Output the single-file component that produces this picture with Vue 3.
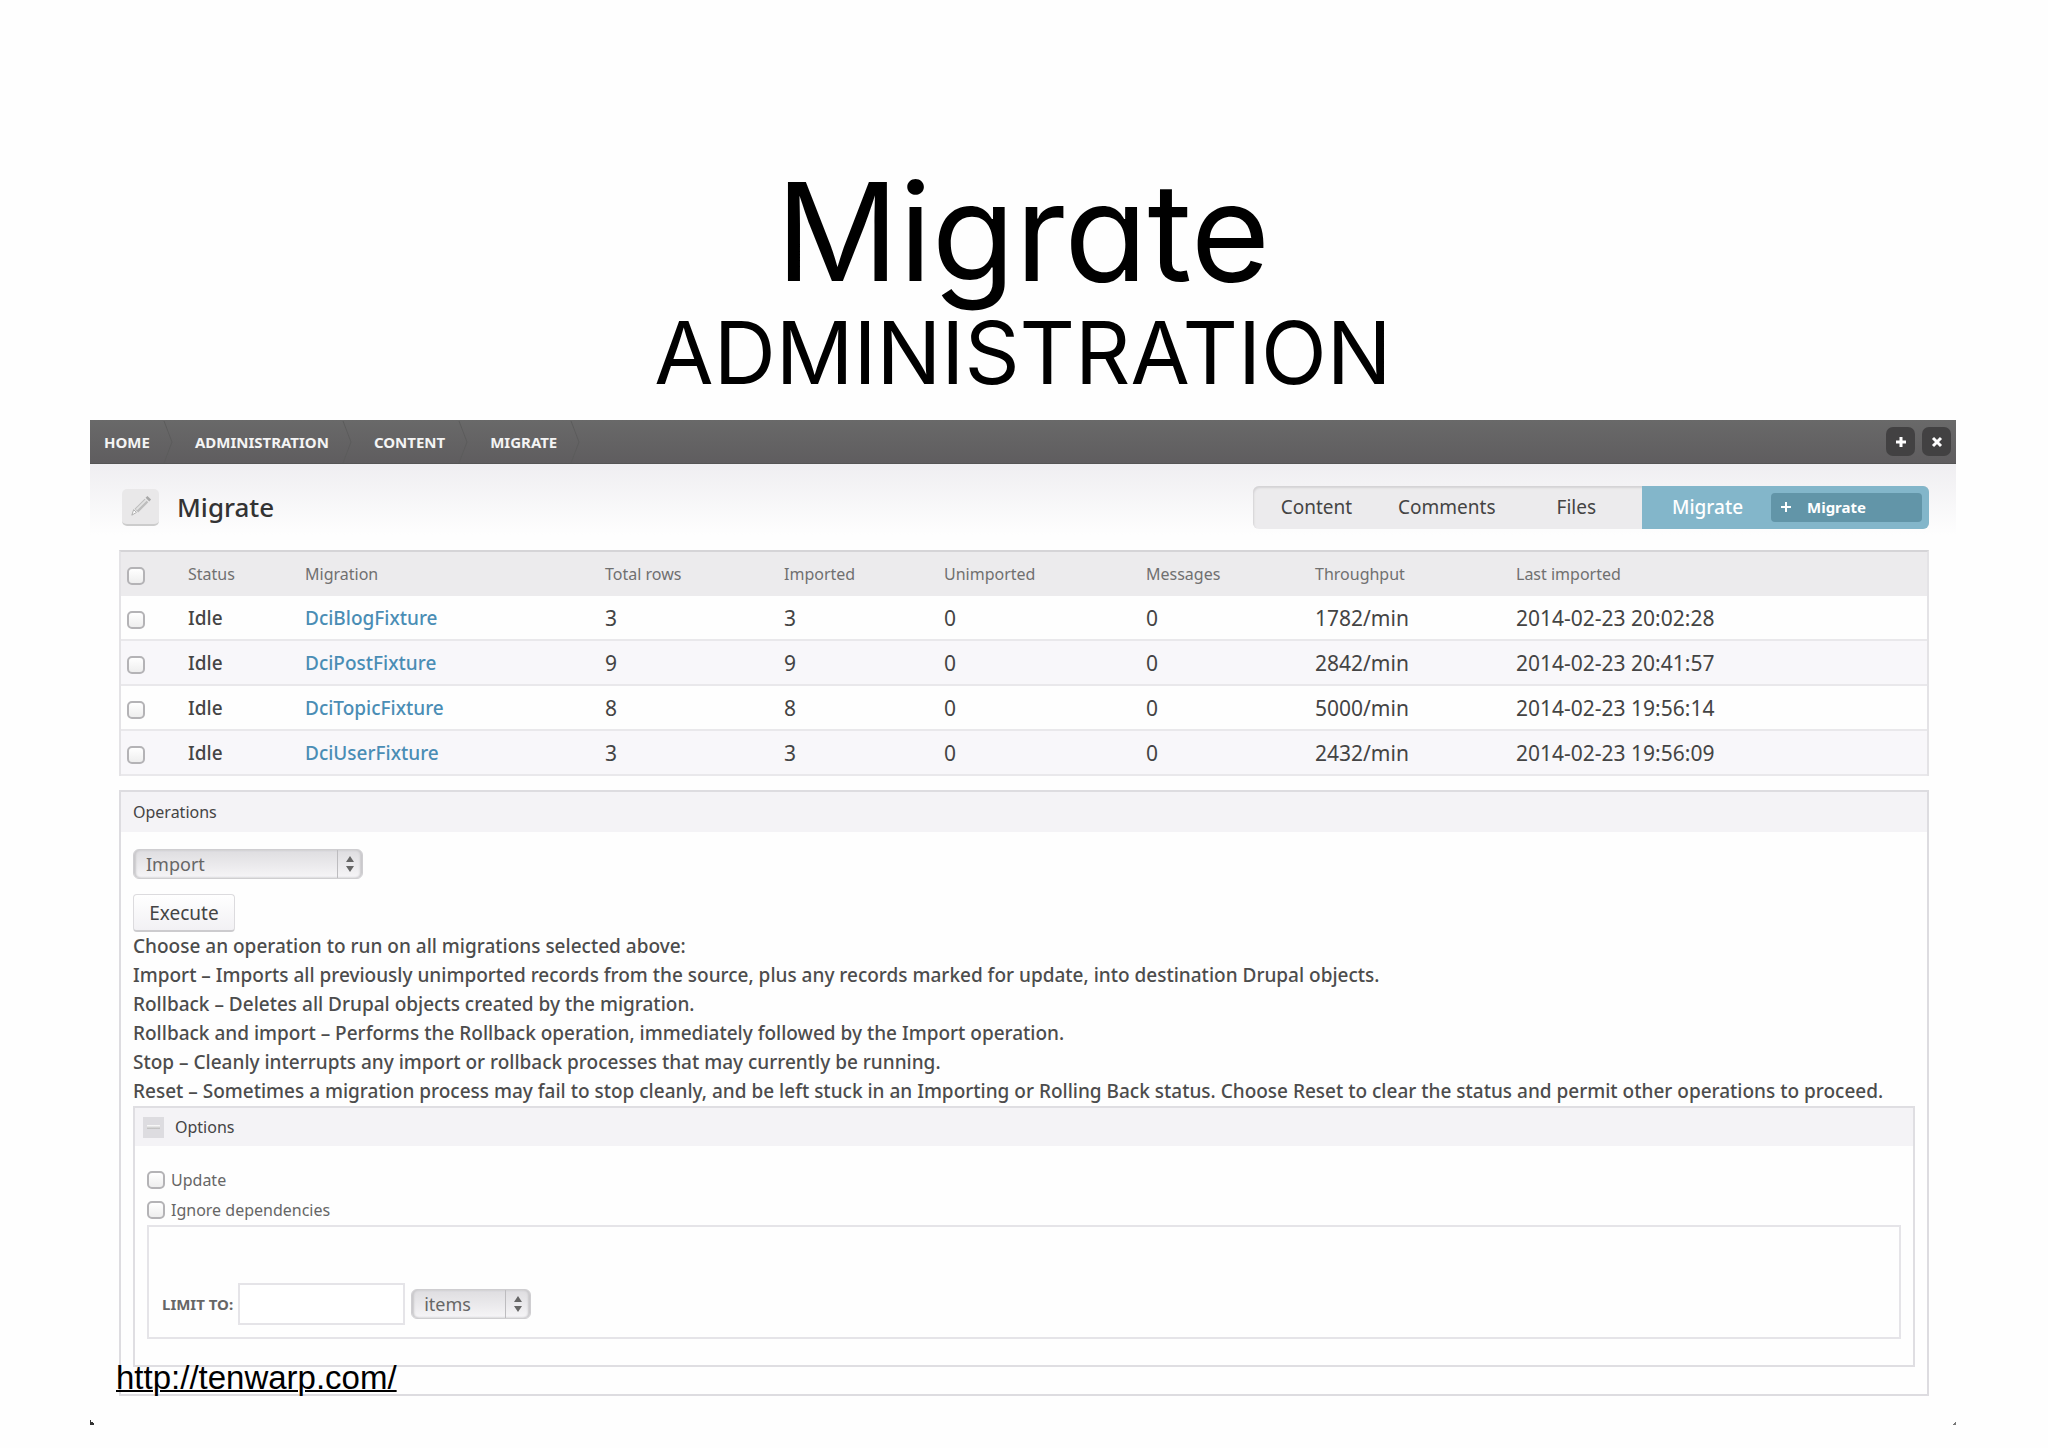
<script setup>
import { ref } from 'vue'

const crumbs = ['Home', 'Administration', 'Content', 'Migrate']
const tabs = ['Content', 'Comments', 'Files']

const columns = [
  { name: 'Status', width: 117 },
  { name: 'Migration', width: 300 },
  { name: 'Total rows', width: 179 },
  { name: 'Imported', width: 160 },
  { name: 'Unimported', width: 202 },
  { name: 'Messages', width: 169 },
  { name: 'Throughput', width: 201 },
]

const rows = ref([
  { name: 'DciBlogFixture', total: 3, imported: 3, rate: '1782/min', last: '2014-02-23 20:02:28', on: false },
  { name: 'DciPostFixture', total: 9, imported: 9, rate: '2842/min', last: '2014-02-23 20:41:57', on: false },
  { name: 'DciTopicFixture', total: 8, imported: 8, rate: '5000/min', last: '2014-02-23 19:56:14', on: false },
  { name: 'DciUserFixture', total: 3, imported: 3, rate: '2432/min', last: '2014-02-23 19:56:09', on: false },
])

const help = [
  'Choose an operation to run on all migrations selected above:',
  'Import – Imports all previously unimported records from the source, plus any records marked for update, into destination Drupal objects.',
  'Rollback – Deletes all Drupal objects created by the migration.',
  'Rollback and import – Performs the Rollback operation, immediately followed by the Import operation.',
  'Stop – Cleanly interrupts any import or rollback processes that may currently be running.',
  'Reset – Sometimes a migration process may fail to stop cleanly, and be left stuck in an Importing or Rolling Back status. Choose Reset to clear the status and permit other operations to proceed.',
]

const operation = ref('Import')
const unit = ref('items')
const limit = ref('')
</script>

<template>
  <main class="slide">
    <header class="heading">
      <h1>Migrate</h1>
      <p>ADMINISTRATION</p>
    </header>

    <section class="window">
      <nav class="bar" aria-label="Breadcrumb">
        <ol class="crumbs">
          <li v-for="c in crumbs" :key="c">
            <a href="#">{{ c }}</a>
            <svg class="chevron" viewBox="0 0 10 42" aria-hidden="true"><path d="M1 0 L9 21 L1 42" /></svg>
          </li>
        </ol>
        <div class="bar-buttons">
          <button type="button" aria-label="Add shortcut">
            <svg viewBox="0 0 12 12"><path d="M6 1V11M1 6H11" /></svg>
          </button>
          <button type="button" aria-label="Close">
            <svg viewBox="0 0 12 12"><path d="M2 2L10 10M10 2L2 10" /></svg>
          </button>
        </div>
      </nav>

      <div class="title-row">
        <span class="pencil">
          <svg viewBox="0 0 24 24" aria-hidden="true">
            <path d="M2 22 L4 16 L7 19 Z" fill="#fff" stroke="#aaa" stroke-width="1" />
            <path d="M5 15 L16 4 L20 8 L9 19 Z" fill="#bdbdbd" />
            <path d="M7 16 L18 5" stroke="#e2e2e2" stroke-width="2" />
            <path d="M17 3 L19 1 L23 5 L21 7 Z" fill="#a8a8a8" />
          </svg>
        </span>
        <h2>Migrate</h2>
        <nav class="tabs" aria-label="Sections">
          <a v-for="t in tabs" :key="t" href="#" class="tab">{{ t }}</a>
          <div class="active">
            <a href="#" class="current">Migrate</a>
            <a href="#" class="add">
              <svg viewBox="0 0 12 12" aria-hidden="true"><path d="M6 1V11M1 6H11" /></svg>
              Migrate
            </a>
          </div>
        </nav>
      </div>

      <div class="content">
        <table>
          <colgroup>
            <col style="width: 67px" />
            <col v-for="c in columns" :key="c.name" :style="{ width: c.width + 'px' }" />
            <col />
          </colgroup>
          <thead>
            <tr>
              <th><input type="checkbox" aria-label="Select all rows" /></th>
              <th v-for="c in columns" :key="c.name">{{ c.name }}</th>
              <th>Last imported</th>
            </tr>
          </thead>
          <tbody>
            <tr v-for="r in rows" :key="r.name">
              <td><input v-model="r.on" type="checkbox" :aria-label="'Select ' + r.name" /></td>
              <td class="name">Idle</td>
              <td class="name"><a href="#">{{ r.name }}</a></td>
              <td>{{ r.total }}</td>
              <td>{{ r.imported }}</td>
              <td>0</td>
              <td>0</td>
              <td>{{ r.rate }}</td>
              <td>{{ r.last }}</td>
            </tr>
          </tbody>
        </table>

        <section class="operations">
          <h3>Operations</h3>
          <div class="operations-body">
            <span class="picker wide">
              <select v-model="operation" aria-label="Operation">
                <option>Import</option>
                <option>Rollback</option>
                <option>Rollback and import</option>
                <option>Stop</option>
                <option>Reset</option>
              </select>
              <svg viewBox="0 0 10 18" aria-hidden="true"><path d="M5 1L9 7H1ZM5 17L1 11H9Z" /></svg>
            </span>
            <button type="button" class="execute">Execute</button>
            <p v-for="h in help" :key="h">{{ h }}</p>

            <section class="options">
              <h3>
                <button type="button" class="toggle" aria-label="Collapse options"></button>
                Options
              </h3>
              <div class="options-body">
                <label><input type="checkbox" />Update</label>
                <label><input type="checkbox" />Ignore dependencies</label>
                <div class="limit">
                  <label for="limit">LIMIT TO:</label>
                  <input id="limit" v-model="limit" type="text" />
                  <span class="picker narrow">
                    <select v-model="unit" aria-label="Limit unit">
                      <option>items</option>
                      <option>seconds</option>
                    </select>
                    <svg viewBox="0 0 10 18" aria-hidden="true"><path d="M5 1L9 7H1ZM5 17L1 11H9Z" /></svg>
                  </span>
                </div>
              </div>
            </section>
          </div>
        </section>
      </div>
      <a class="source" href="http://tenwarp.com/">http://tenwarp.com/</a>
    </section>
  </main>
</template>

<style>
body {
  background: #fefefe;
}
</style>

<style scoped>
* {
  box-sizing: border-box;
}
h1, h2, h3, p, ol {
  margin: 0;
  padding: 0;
  font-weight: 400;
}
a {
  color: inherit;
  text-decoration: none;
}
button, input, select {
  font: inherit;
  color: inherit;
  margin: 0;
}
.slide {
  padding: 154px 92px 24px 90px;
  font-family: "Noto Sans", "Open Sans", sans-serif;
  color: #444;
}
.heading {
  font-family: Inter, sans-serif;
  font-feature-settings: "cv11";
  text-align: center;
  color: #000;
  padding-bottom: 24px;
}
.heading h1 {
  font-size: 136px;
  line-height: 156px;
}
.heading p {
  font-size: 86px;
  line-height: 86px;
}
.window {
  position: relative;
  background: linear-gradient(#efeef1, #fefefe) 0 43px / 100% 72px no-repeat;
  padding-bottom: 29px;
}
/* dark corners of the window frame */
.window::before,
.window::after {
  content: "";
  position: absolute;
  bottom: 0;
  width: 5px;
  height: 5px;
}
.window::before {
  left: 0;
  background: linear-gradient(45deg, #333 50%, transparent 50%);
}
.window::after {
  right: 0;
  background: linear-gradient(-45deg, #777 35%, transparent 35%);
}
.bar {
  display: flex;
  justify-content: space-between;
  align-items: center;
  height: 44px;
  padding: 0 5px 0 14px;
  background: linear-gradient(#696969, #5f5d5f);
  border-bottom: 1px solid #555;
}
.crumbs {
  display: flex;
  list-style: none;
  color: #f4f4f4;
  font-size: 15px;
  font-weight: 700;
  text-transform: uppercase;
}
.crumbs li {
  display: flex;
  align-items: center;
  gap: 13px;
  margin-right: 22px;
}
.chevron {
  width: 10px;
  height: 42px;
  fill: none;
  stroke: #5c5c5c;
  stroke-width: 1;
}
.bar-buttons {
  display: flex;
  gap: 7px;
}
.bar-buttons button {
  display: grid;
  place-items: center;
  width: 29px;
  height: 29px;
  padding: 0;
  border: 0;
  border-radius: 7px;
  background: #424142;
}
.bar-buttons svg,
.add svg {
  width: 12px;
  height: 12px;
  fill: none;
  stroke: #fff;
  stroke-width: 3;
}
.title-row {
  display: flex;
  align-items: center;
  height: 86px;
  padding: 0 27px 0 32px;
}
.pencil {
  display: grid;
  place-items: center;
  width: 37px;
  height: 37px;
  border-radius: 5px;
  background: #e9e8e9;
  border-bottom: 2px solid #ccc;
}
.pencil svg {
  width: 22px;
  height: 22px;
}
h2 {
  margin-left: 18px;
  font-size: 26px;
  font-weight: 500;
  line-height: 40px;
  color: #333;
}
.tabs {
  display: flex;
  margin-left: auto;
  height: 43px;
  line-height: 43px;
  border-radius: 6px;
  overflow: hidden;
  background: #ecebed;
  box-shadow: inset 1px 2px 2px #d4d3d5;
  font-size: 19px;
}
.tab {
  padding: 0 22px;
}
.tab:first-child {
  padding: 0 24px 0 28px;
}
.tab:nth-child(3) {
  padding: 0 46px 0 39px;
}
.active {
  display: flex;
  align-items: center;
  justify-content: space-between;
  width: 287px;
  padding: 0 7px 0 30px;
  background: #83b6ca;
  color: #fff;
}
.current {
  font-weight: 500;
}
.add {
  display: flex;
  align-items: center;
  gap: 15px;
  width: 151px;
  height: 29px;
  padding-left: 9px;
  border-radius: 4px;
  background: #6295a8;
  font-size: 15px;
  font-weight: 700;
}
.add svg {
  stroke-width: 2;
}
.content {
  padding: 0 27px 0 29px;
}
table {
  width: 100%;
  table-layout: fixed;
  border-collapse: separate;
  border-spacing: 0;
  border: 2px solid #e4e3e6;
  border-width: 2px 2px 0;
  border-top-color: #d5d4d7;
}
th, td {
  padding: 0;
  text-align: left;
  white-space: nowrap;
}
th {
  height: 44px;
  background: #ecebed;
  font-size: 16px;
  font-weight: 400;
  color: #707070;
}
td {
  height: 45px;
  border-bottom: 2px solid #e9e8eb;
  font-size: 21px;
  line-height: 24px;
}
td.name {
  font-size: 19px;
  font-weight: 500;
}
td a {
  color: #4a8db5;
}
tbody tr:nth-child(even) {
  background: #f8f7fa;
}
input[type="checkbox"] {
  appearance: none;
  display: block;
  flex: none;
  width: 18px;
  height: 18px;
  border: 2px solid #b4b3b6;
  border-radius: 5px;
  background: linear-gradient(#fff, #eee);
}
th input[type="checkbox"],
td input[type="checkbox"] {
  margin: 4px 0 0 6px;
}
.operations {
  margin-top: 14px;
  border: 2px solid #dddce0;
}
h3 {
  display: flex;
  align-items: center;
  height: 40px;
  padding-left: 12px;
  background: #f4f3f6;
  font-size: 16px;
}
.operations-body {
  display: flex;
  flex-direction: column;
  align-items: flex-start;
  padding: 17px 12px 27px;
}
.picker {
  position: relative;
  display: flex;
  height: 30px;
  font-size: 18px;
}
.picker select {
  appearance: none;
  width: 100%;
  height: 30px;
  padding: 0 12px;
  border: 1px solid #cfced1;
  border-radius: 6px;
  background: linear-gradient(#dedde0, #f6f5f7);
  box-shadow: inset 2px 0 2px #c9c8cb, inset -2px 0 2px #c9c8cb;
  color: #666;
}
.picker::after {
  content: "";
  position: absolute;
  right: 25px;
  top: 1px;
  bottom: 1px;
  border-left: 1px solid #bdbcbf;
}
.picker svg {
  position: absolute;
  right: 8px;
  top: 6px;
  width: 10px;
  height: 18px;
  fill: #666;
  pointer-events: none;
}
.wide {
  width: 230px;
}
.narrow {
  width: 120px;
}
.execute {
  height: 38px;
  width: 102px;
  margin: 15px 0 0;
  padding: 0;
  border: 1px solid #dcdbde;
  border-bottom: 2px solid #cccbce;
  border-radius: 4px;
  background: linear-gradient(#fff, #f2f1f4);
  font-size: 19px;
}
.operations-body p {
  font-size: 19px;
  font-weight: 500;
  line-height: 29px;
  white-space: nowrap;
  color: #4c4c4c;
}
.options {
  align-self: stretch;
  border: 2px solid #dfdee2;
}
.toggle {
  width: 21px;
  height: 21px;
  margin-right: 11px;
  padding: 0;
  border: 0;
  background: linear-gradient(#fff, #bbb) center / 13px 4px no-repeat #dddce0;
}
.options h3 {
  height: 38px;
  padding-left: 8px;
}
.options-body {
  padding: 19px 12px 26px;
  font-size: 16px;
}
.options-body > label {
  display: flex;
  align-items: center;
  gap: 6px;
  height: 30px;
  color: #666;
}
.limit {
  display: flex;
  align-items: center;
  height: 114px;
  padding: 44px 14px 0 13px;
  border: 2px solid #e5e4e8;
}
.limit label {
  font-size: 15px;
  font-weight: 700;
  color: #666;
}
.limit input {
  width: 167px;
  height: 42px;
  margin: 0 6px 0 5px;
  padding: 0 8px;
  border: 2px solid #e5e4e8;
  background: #fff;
}
.source {
  position: absolute;
  left: 26px;
  bottom: 29px;
  font-family: "Liberation Sans", Arial, sans-serif;
  font-size: 33px;
  line-height: 37px;
  color: #000;
  text-decoration: underline;
  text-decoration-thickness: 2px;
}
</style>
